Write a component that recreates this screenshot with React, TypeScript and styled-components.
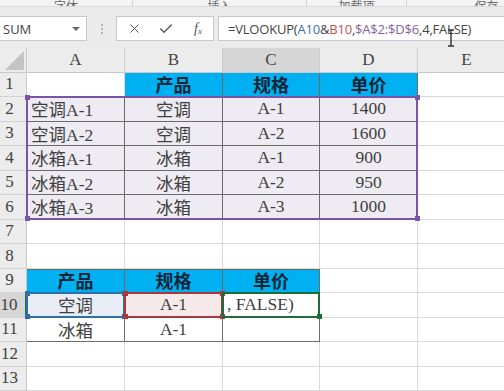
import React from "react";
import styled, { createGlobalStyle } from "styled-components";
import { Check, X } from "lucide-react";

const SERIF = `"Liberation Serif", "Noto Sans CJK SC", serif`;
const SANS = `"Open Sans", "Noto Sans", "Noto Sans CJK SC", sans-serif`;
const CJK = `"Noto Sans CJK SC", "Liberation Sans", sans-serif`;

const GlobalStyle = createGlobalStyle`
  html, body { margin: 0; padding: 0; background: #fff; overflow: hidden; }
  * { box-sizing: border-box; }
`;

const Screen = styled.div`
  width: 504px;
  height: 391px;
  overflow: hidden;
  background: #fff;
  display: flex;
  flex-direction: column;
`;

// bottom edge of the ribbon: only the lower part of the group labels shows
const RibbonFoot = styled.div`
  height: 8px;
  display: flex;
  background: #f3f3f3;
  border-bottom: 1px solid #dadada;
  overflow: hidden;
`;

const RibbonGroup = styled.div<{ $w: number }>`
  flex: 0 0 ${(p) => p.$w}px;
  border-right: 1px solid #d2d2d2;
  display: flex;
  justify-content: center;
  align-items: flex-end;
  font: 12px/12px ${CJK};
  color: #666;
  span {
    margin-bottom: -6px;
  }
`;

const FormulaRow = styled.div`
  height: 44px;
  display: flex;
  align-items: flex-start;
  padding-top: 9px;
  background: #ebebeb;
`;

const NameBox = styled.div`
  width: 87px;
  height: 25px;
  background: #fff;
  border: 1px solid #c8c8c8;
  border-left: none;
  display: flex;
  align-items: center;
  justify-content: space-between;
  padding: 0 6px 0 3px;
  font: 13px ${SANS};
  color: #444;
`;

const DropArrow = styled.span`
  width: 0;
  height: 0;
  border-left: 4px solid transparent;
  border-right: 4px solid transparent;
  border-top: 4px solid #6a6a6a;
`;

const Grip = styled.div`
  width: 29px;
  height: 25px;
  display: flex;
  flex-direction: column;
  align-items: center;
  justify-content: center;
  gap: 2px;
  i {
    width: 2px;
    height: 2px;
    background: #b4b4b4;
  }
`;

const ButtonBox = styled.div`
  width: 98px;
  height: 25px;
  background: #fff;
  border: 1px solid #c8c8c8;
  display: grid;
  grid-template-columns: repeat(3, 32px);
  padding-left: 1px;
  align-items: center;
  justify-items: center;
  color: #555;
`;

const FxGlyph = styled.span`
  font: italic 14px ${SERIF};
  color: #555;
  sub {
    font-size: 9px;
    vertical-align: -1px;
  }
`;

const FormulaInput = styled.div`
  flex: 1;
  margin-left: 4px;
  height: 25px;
  background: #fff;
  border: 1px solid #c8c8c8;
  border-right: none;
  padding-left: 9px;
  display: flex;
  align-items: center;
  font: 13px ${SANS};
  letter-spacing: -0.2px;
  color: #444;
  white-space: nowrap;
  position: relative;
`;

const Ref = styled.span<{ $c: string }>`
  color: ${(p) => p.$c};
`;

const Caret = styled.svg`
  position: absolute;
  left: 228px;
  top: 12px;
`;

const Sheet = styled.div`
  display: grid;
  grid-template-columns: 27px 98px 98px 97px 98px 98px;
  grid-template-rows: 25px repeat(13, 24.5px);
`;

const Corner = styled.div`
  grid-row: 1;
  grid-column: 1;
  background: #ececec;
  border-right: 1px solid #c9c9c9;
  border-bottom: 1px solid #c9c9c9;
  display: flex;
  align-items: flex-end;
  justify-content: flex-end;
  padding: 0 2px 2px 0;
`;

const ColHead = styled.div<{ $col: number; $active?: boolean }>`
  grid-row: 1;
  grid-column: ${(p) => p.$col};
  background: ${(p) => (p.$active ? "#d6d6d6" : "#ececec")};
  border-right: 1px solid #cdcdcd;
  border-bottom: 1px solid #c6c6c6;
  display: flex;
  align-items: center;
  justify-content: center;
  font: 17px ${SERIF};
  color: #444;
`;

const RowHead = styled.div<{ $row: number; $active?: boolean }>`
  grid-row: ${(p) => p.$row};
  grid-column: 1;
  background: ${(p) => (p.$active ? "#d6d6d6" : "#ececec")};
  border-right: ${(p) => (p.$active ? "2px solid #217346" : "1px solid #c9c9c9")};
  border-bottom: 1px solid #d3d3d3;
  display: flex;
  align-items: center;
  justify-content: center;
  padding-right: 7px;
  font: 17px ${SERIF};
  color: #404040;
`;

const Cell = styled.div<{
  $row: number;
  $col: number;
  $fill?: string;
  $left?: boolean;
  $ruled?: boolean;
  $head?: boolean;
  $topRule?: boolean;
}>`
  grid-row: ${(p) => p.$row};
  grid-column: ${(p) => p.$col};
  background: ${(p) => p.$fill ?? "#fff"};
  border-right: 1px solid ${(p) => (p.$ruled ? "#6c6c6c" : "#d9d9d9")};
  border-bottom: 1px solid ${(p) => (p.$ruled ? "#6c6c6c" : "#d9d9d9")};
  box-shadow: ${(p) => (p.$topRule ? "inset 0 1px 0 #6c6c6c" : "none")};
  display: flex;
  align-items: center;
  justify-content: ${(p) => (p.$left ? "flex-start" : "center")};
  padding: 0 4px;
  font: ${(p) => (p.$head ? `700 18px ${CJK}` : `17.5px ${SERIF}`)};
  color: ${(p) => (p.$head ? "#0f2536" : "#404040")};
  white-space: nowrap;
  overflow: hidden;
`;

// coloured frame Excel draws round each range named in the formula being edited
const RefFrame = styled.div<{ $col: string; $row: string; $color: string }>`
  grid-column: ${(p) => p.$col};
  grid-row: ${(p) => p.$row};
  margin: -1px 0 0 -1px;
  border: 2px solid ${(p) => p.$color};
  position: relative;
  pointer-events: none;
  z-index: 2;
`;

const Handle = styled.span<{ $at: "tl" | "tr" | "bl" | "br"; $color: string }>`
  position: absolute;
  width: 5px;
  height: 5px;
  background: ${(p) => p.$color};
  ${(p) => (p.$at[0] === "t" ? "top: -3.5px;" : "bottom: -3.5px;")}
  ${(p) => (p.$at[1] === "l" ? "left: -3.5px;" : "right: -3.5px;")}
`;

const BLUE = "#00b0f0";
const RANGE = "#eeecf2";

type CellDef = {
  text?: string;
  head?: boolean;
  left?: boolean;
  fill?: string;
  ruled?: boolean;
  topRule?: boolean;
};

const head = (text: string): CellDef => ({ text, head: true, fill: BLUE, ruled: true });
const data = (text: string, left = false): CellDef => ({ text, left, fill: RANGE, ruled: true });
const blank: CellDef = {};

const rows: CellDef[][] = [
  [blank, head("产品"), head("规格"), head("单价"), blank],
  [data("空调A-1", true), data("空调"), data("A-1"), data("1400"), blank],
  [data("空调A-2", true), data("空调"), data("A-2"), data("1600"), blank],
  [data("冰箱A-1", true), data("冰箱"), data("A-1"), data("900"), blank],
  [data("冰箱A-2", true), data("冰箱"), data("A-2"), data("950"), blank],
  [data("冰箱A-3", true), data("冰箱"), data("A-3"), data("1000"), blank],
  [blank, blank, blank, blank, blank],
  [blank, blank, blank, blank, blank],
  [
    { ...head("产品"), topRule: true },
    { ...head("规格"), topRule: true },
    { ...head("单价"), topRule: true },
    blank,
    blank,
  ],
  [
    { text: "空调", fill: "#e9eef6", ruled: true },
    { text: "A-1", fill: "#f6e9ea", ruled: true },
    { text: ", FALSE)", left: true, ruled: true },
    blank,
    blank,
  ],
  [
    { text: "冰箱", ruled: true },
    { text: "A-1", ruled: true },
    { text: "", ruled: true },
    blank,
    blank,
  ],
  [blank, blank, blank, blank, blank],
  [blank, blank, blank, blank, blank],
];

const columns = ["A", "B", "C", "D", "E"];
const corners: ("tl" | "tr" | "bl" | "br")[] = ["tl", "tr", "bl", "br"];

const FormulaBar = () => (
  <>
    <RibbonFoot>
      <RibbonGroup $w={133}>
        <span>字体</span>
      </RibbonGroup>
      <RibbonGroup $w={174}>
        <span>插入</span>
      </RibbonGroup>
      <RibbonGroup $w={100}>
        <span>加载项</span>
      </RibbonGroup>
      <RibbonGroup $w={160}>
        <span>保存</span>
      </RibbonGroup>
    </RibbonFoot>
    <FormulaRow>
      <NameBox>
        <span>SUM</span>
        <DropArrow />
      </NameBox>
      <Grip>
        <i />
        <i />
        <i />
      </Grip>
      <ButtonBox>
        <X size={15} strokeWidth={1.6} />
        <Check size={16} strokeWidth={2} />
        <FxGlyph>
          f<sub>x</sub>
        </FxGlyph>
      </ButtonBox>
      <FormulaInput>
        =VLOOKUP(<Ref $c="#3d6fb3">A10</Ref>&amp;<Ref $c="#c0504d">B10</Ref>,
        <Ref $c="#8064a2">$A$2:$D$6</Ref>,4,FALSE)
        <Caret width="8" height="18" viewBox="0 0 8 18">
          <path d="M1 1h6M4 1v16M1 17h6" stroke="#333" strokeWidth="1.4" fill="none" />
        </Caret>
      </FormulaInput>
    </FormulaRow>
  </>
);

export default function App() {
  return (
    <Screen>
      <GlobalStyle />
      <FormulaBar />
      <Sheet>
        <Corner>
          <svg width="19" height="19" viewBox="0 0 19 19">
            <polygon points="19,0 19,19 0,19" fill="#c4c4c4" />
          </svg>
        </Corner>
        {columns.map((c, i) => (
          <ColHead key={c} $col={i + 2} $active={c === "C"}>
            {c}
          </ColHead>
        ))}
        {rows.map((row, r) => (
          <React.Fragment key={r}>
            <RowHead $row={r + 2} $active={r === 9}>
              {r + 1}
            </RowHead>
            {row.map((cell, c) => (
              <Cell
                key={c}
                $row={r + 2}
                $col={c + 2}
                $fill={cell.fill}
                $left={cell.left}
                $ruled={cell.ruled}
                $head={cell.head}
                $topRule={cell.topRule}
              >
                {cell.text}
              </Cell>
            ))}
          </React.Fragment>
        ))}
        <RefFrame $col="2 / 6" $row="3 / 8" $color="#7a54a6">
          {corners.map((k) => (
            <Handle key={k} $at={k} $color="#7a54a6" />
          ))}
        </RefFrame>
        <RefFrame $col="2 / 3" $row="11 / 12" $color="#2f6fa6">
          {corners.map((k) => (
            <Handle key={k} $at={k} $color="#2f6fa6" />
          ))}
        </RefFrame>
        <RefFrame $col="3 / 4" $row="11 / 12" $color="#a83a3e">
          {corners.map((k) => (
            <Handle key={k} $at={k} $color="#a83a3e" />
          ))}
        </RefFrame>
        <RefFrame $col="4 / 5" $row="11 / 12" $color="#1e6b3c">
          <Handle $at="br" $color="#1e6b3c" />
        </RefFrame>
      </Sheet>
    </Screen>
  );
}
